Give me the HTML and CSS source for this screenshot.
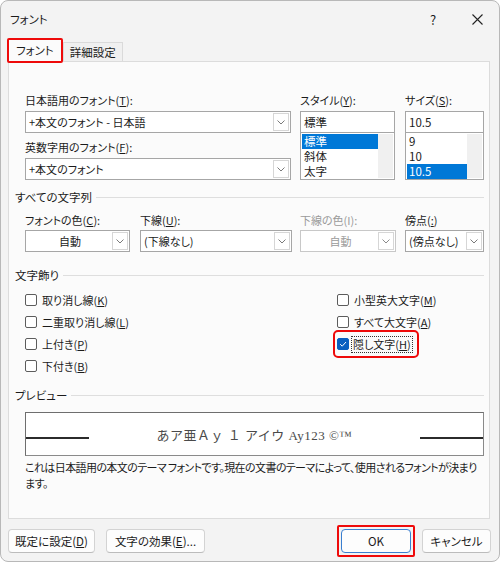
FILE: index.html
```html
<!DOCTYPE html>
<html lang="ja">
<head>
    <meta charset="UTF-8">
    <title>フォント</title>
    <link rel="stylesheet" href="styles.css">
</head>
<body>
<div class="dialog">
    <div class="titlebar">
        <span class="title">フォント</span>
        <span class="help">?</span>
        <span class="close">
            <svg width="11" height="11" viewBox="0 0 11 11"><path d="M0.5 0.5 L10.5 10.5 M10.5 0.5 L0.5 10.5" stroke="#222" stroke-width="1.1"/></svg>
        </span>
    </div>

    <div class="tabs">
        <div class="tab active">フォント</div>
        <div class="tab">詳細設定</div>
    </div>

    <div class="panel">
        <div class="font-row">
            <div class="col col-name">
                <div class="label">日本語用のフォント(<u>T</u>):</div>
                <div class="combo">
                    <span class="value">+本文のフォント - 日本語</span>
                    <span class="arrow"><svg width="8" height="5" viewBox="0 0 8 5"><polyline points="0.5,0.5 4,4 7.5,0.5" fill="none" stroke="#7a7a7a"/></svg></span>
                </div>
                <div class="label label-gap">英数字用のフォント(<u>F</u>):</div>
                <div class="combo">
                    <span class="value">+本文のフォント</span>
                    <span class="arrow"><svg width="8" height="5" viewBox="0 0 8 5"><polyline points="0.5,0.5 4,4 7.5,0.5" fill="none" stroke="#7a7a7a"/></svg></span>
                </div>
            </div>
            <div class="col col-style">
                <div class="label">スタイル(<u>Y</u>):</div>
                <div class="textbox">標準</div>
                <div class="listbox">
                    <ul>
                        <li class="sel">標準</li>
                        <li>斜体</li>
                        <li>太字</li>
                    </ul>
                    <div class="scroll"></div>
                </div>
            </div>
            <div class="col col-size">
                <div class="label">サイズ(<u>S</u>):</div>
                <div class="textbox">10.5</div>
                <div class="listbox">
                    <ul>
                        <li>9</li>
                        <li>10</li>
                        <li class="sel">10.5</li>
                    </ul>
                    <div class="scroll"></div>
                </div>
            </div>
        </div>

        <div class="group-title">すべての文字列</div>
        <div class="all-row">
            <div class="col col-color">
                <div class="label">フォントの色(<u>C</u>):</div>
                <div class="combo">
                    <span class="value center">自動</span>
                    <span class="arrow"><svg width="8" height="5" viewBox="0 0 8 5"><polyline points="0.5,0.5 4,4 7.5,0.5" fill="none" stroke="#7a7a7a"/></svg></span>
                </div>
            </div>
            <div class="col col-under">
                <div class="label">下線(<u>U</u>):</div>
                <div class="combo">
                    <span class="value">(下線なし)</span>
                    <span class="arrow"><svg width="8" height="5" viewBox="0 0 8 5"><polyline points="0.5,0.5 4,4 7.5,0.5" fill="none" stroke="#7a7a7a"/></svg></span>
                </div>
            </div>
            <div class="col col-ucolor disabled">
                <div class="label">下線の色(I):</div>
                <div class="combo">
                    <span class="value center">自動</span>
                    <span class="arrow"><svg width="8" height="5" viewBox="0 0 8 5"><polyline points="0.5,0.5 4,4 7.5,0.5" fill="none" stroke="#8a8a8a"/></svg></span>
                </div>
            </div>
            <div class="col col-dot">
                <div class="label">傍点(<u>:</u>)</div>
                <div class="combo">
                    <span class="value">(傍点なし)</span>
                    <span class="arrow"><svg width="8" height="5" viewBox="0 0 8 5"><polyline points="0.5,0.5 4,4 7.5,0.5" fill="none" stroke="#7a7a7a"/></svg></span>
                </div>
            </div>
        </div>

        <div class="group-title">文字飾り</div>
        <div class="effects">
            <div class="check"><span class="box"></span><span>取り消し線(<u>K</u>)</span></div>
            <div class="check"><span class="box"></span><span>小型英大文字(<u>M</u>)</span></div>
            <div class="check"><span class="box"></span><span>二重取り消し線(<u>L</u>)</span></div>
            <div class="check"><span class="box"></span><span>すべて大文字(<u>A</u>)</span></div>
            <div class="check"><span class="box"></span><span>上付き(<u>P</u>)</span></div>
            <div class="check">
                <span class="marked">
                    <span class="box checked"><svg width="10" height="10" viewBox="0 0 10 10"><polyline points="2.2,5.2 4.2,7.2 8,3" fill="none" stroke="#fff" stroke-width="1"/></svg></span>
                    <span class="focus">隠し文字(<u>H</u>)</span>
                </span>
            </div>
            <div class="check"><span class="box"></span><span>下付き(<u>B</u>)</span></div>
        </div>

        <div class="group-title">プレビュー</div>
        <div class="preview">
            <span class="pv-line"></span>
            <span class="pv-text">あア亜Ａｙ １ アイウ Ay123 ©™</span>
            <span class="pv-line"></span>
        </div>
        <p class="desc">これは日本語用の本文のテーマ フォントです。現在の文書のテーマによって、使用されるフォントが決まり<br>ます。</p>
    </div>

    <div class="buttons">
        <button class="btn btn-default">既定に設定(<u>D</u>)</button>
        <button class="btn btn-effect">文字の効果(<u>E</u>)...</button>
        <span class="spacer"></span>
        <span class="ok-mark"><button class="btn btn-ok">OK</button></span>
        <button class="btn btn-cancel">キャンセル</button>
    </div>
</div>
</body>
</html>
```

FILE: styles.css
```css
* {
    box-sizing: border-box;
}
body {
    margin: 0;
    background: #fff;
    font-family: "Noto Sans CJK JP", "Noto Sans", sans-serif;
    font-size: 11px;
    font-feature-settings: "palt";
    color: #1b1b1b;
}
u {
    text-decoration-thickness: 1px;
    text-underline-offset: 1px;
}
.dialog {
    width: 500px;
    height: 562px;
    border: 1px solid #b8b8b8;
    border-radius: 8px;
    background: #f3f3f3;
    overflow: hidden;
    display: flex;
    flex-direction: column;
}
.titlebar {
    height: 36px;
    display: flex;
    align-items: center;
    padding-left: 9px;
    font-size: 11.5px;
}
.title {
    flex: 1;
}
.help {
    width: 44px;
    text-align: center;
    font-size: 13px;
}
.close {
    width: 44px;
    display: flex;
    justify-content: center;
}

.tabs {
    height: 25px;
    display: flex;
    align-items: flex-end;
    padding-left: 6px;
    font-size: 11.5px;
}
.tab {
    height: 20px;
    line-height: 19px;
    padding: 0 6px;
    border: 1px solid #dadada;
    border-bottom: none;
    background: #f0f0f0;
}
.tab.active {
    height: 25px;
    line-height: 21px;
    padding: 0 7px;
    border: 2px solid #ee0a0a;
    border-radius: 2px;
    background: #fbfbfb;
    position: relative;
    z-index: 1;
    margin-bottom: -1px;
}

.panel {
    height: 458px;
    margin: -1px 9px 0 7px;
    border: 1px solid #dcdcdc;
    background: #fbfbfb;
    padding: 30px 5px 0 6px;
}

.label {
    height: 16px;
    line-height: 16px;
    white-space: nowrap;
}
.label-gap {
    margin-top: 6px;
}

.font-row {
    display: flex;
    gap: 9px;
    padding-left: 10px;
}
.col-name { width: 266px; }
.col-style { width: 95px; margin-right: 1px; }
.col-size { width: 79px; }

.combo {
    height: 22px;
    margin-top: 3px;
    display: flex;
    border: 1px solid #a6a6a6;
    background: #fff;
}
.combo .value {
    flex: 1;
    padding-left: 3px;
    line-height: 20px;
    white-space: nowrap;
}
.combo .value.center {
    text-align: center;
}
.combo .arrow {
    width: 16px;
    margin: 1px;
    border: 1px solid #d6d6d6;
    display: flex;
    align-items: center;
    justify-content: center;
}

.textbox {
    height: 22px;
    margin-top: 3px;
    border: 1px solid #a6a6a6;
    background: #fff;
    padding-left: 3px;
    line-height: 20px;
    font-size: 11.5px;
}
.listbox {
    height: 47px;
    border: 1px solid #a6a6a6;
    border-top: none;
    background: #fff;
    display: flex;
    padding: 1px;
}
.listbox ul {
    flex: 1;
    margin: 0;
    padding: 0;
    list-style: none;
}
.listbox li {
    height: 15px;
    line-height: 15px;
    padding-left: 2px;
    font-size: 11.5px;
}
.listbox li.sel {
    background: #0078d7;
    color: #fff;
}
.scroll {
    width: 15px;
    background: #f0f0f0;
}

.group-title {
    display: flex;
    align-items: center;
    gap: 4px;
    height: 16px;
    line-height: 16px;
    font-size: 11.5px;
    margin-top: 9px;
}
.group-title::after {
    content: "";
    flex: 1;
    border-top: 1px solid #dedede;
}

.all-row {
    display: flex;
    padding-left: 10px;
    margin-top: 7px;
}
.all-row .combo {
    margin-top: 2px;
}
.col-color { width: 105px; margin-right: 10px; }
.col-under { width: 152px; margin-right: 8px; }
.col-ucolor { width: 96px; margin-right: 9px; }
.col-dot { width: 79px; }

.disabled .label,
.disabled .value {
    color: #9a9a9a;
}
.disabled .combo {
    border-color: #c8c8c8;
}

.all-row + .group-title {
    margin-top: 15px;
}

.effects {
    display: grid;
    grid-template-columns: 312px 1fr;
    grid-auto-rows: 22px;
    padding-left: 10px;
    margin-top: 6px;
}
.check {
    display: flex;
    align-items: center;
    gap: 5px;
    white-space: nowrap;
}
.box {
    width: 12px;
    height: 12px;
    border: 1px solid #5c5c5c;
    border-radius: 2px;
    background: #fff;
    flex-shrink: 0;
}
.box.checked {
    background: #0a5fc0;
    border-color: #0a5fc0;
    display: flex;
    align-items: center;
    justify-content: center;
}
.marked {
    display: flex;
    align-items: center;
    gap: 2px;
    height: 20px;
    padding-right: 2px;
    outline: 2px solid #ee0a0a;
    outline-offset: 2px;
    border-radius: 1px;
}
.focus {
    border: 1px dotted #333;
    padding: 0 1px;
    line-height: 15px;
}

.effects + .group-title {
    margin-top: 10px;
}

.preview {
    height: 44px;
    margin: 9px 0 0 10px;
    border: 1px solid #8a8a8a;
    border-top-color: #6e6e6e;
    border-left-color: #6e6e6e;
    background: #fff;
    display: flex;
    align-items: center;
    justify-content: space-between;
}
.pv-line {
    width: 63px;
    margin-top: 8px;
    border-top: 2px solid #2b2b2b;
}
.pv-text {
    font-family: "Liberation Serif", "Noto Sans CJK JP", serif;
    font-feature-settings: normal;
    font-size: 13px;
    color: #4a4a4a;
    letter-spacing: 0.5px;
}
.desc {
    margin: 3px 0 0 10px;
    line-height: 16px;
    letter-spacing: -0.6px;
    white-space: nowrap;
}

.buttons {
    display: flex;
    align-items: center;
    height: 32px;
    margin-top: 6px;
    padding: 0 8px 0 7px;
}
.spacer {
    flex: 1;
}
.btn {
    height: 24px;
    padding: 0;
    font-family: inherit;
    font-size: 11.5px;
    font-feature-settings: "palt";
    color: #1b1b1b;
    background: #fdfdfd;
    border: 1px solid #d3d3d3;
    border-bottom-color: #bcbcbc;
    border-radius: 4px;
}
.btn-default { width: 87px; }
.btn-effect { width: 99px; margin-left: 11px; }
.btn-ok {
    width: 70px;
    border-color: #3a7fd0;
    display: block;
}
.btn-cancel { width: 69px; margin-left: 7px; }
.ok-mark {
    border: 2px solid #ee0a0a;
    border-radius: 2px;
    padding: 2px;
}
```
